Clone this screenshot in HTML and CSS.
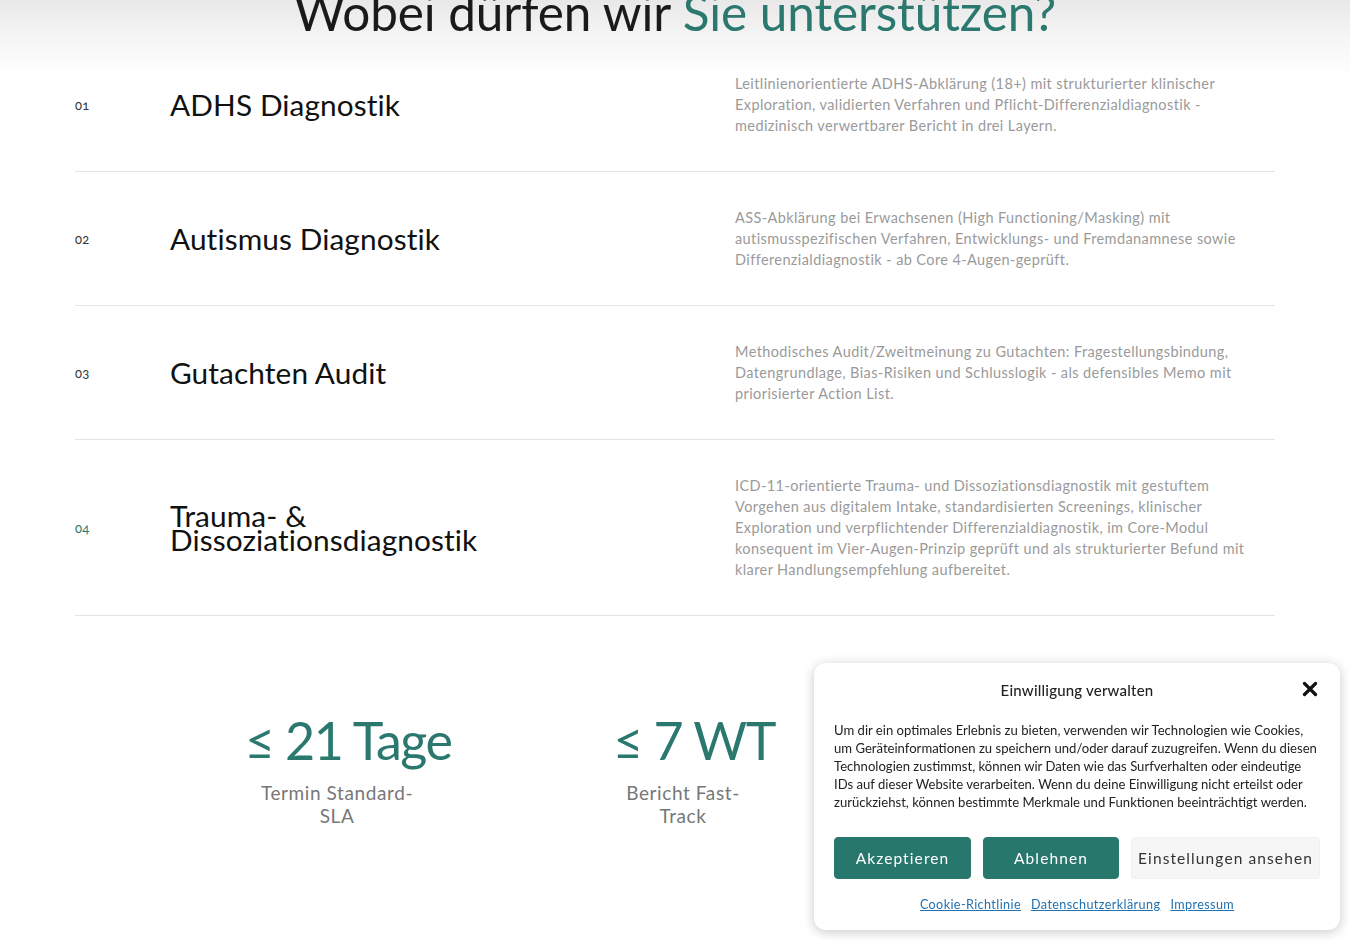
FILE: index.html
```html
<!DOCTYPE html>
<html lang="de">
<head>
<meta charset="utf-8">
<title>Leistungen</title>
<link rel="stylesheet" href="styles.css">
</head>
<body>
<main class="page">
  <section class="services">
    <h2 class="services-title">Wobei dürfen wir <span class="accent">Sie unterstützen?</span></h2>
    <div class="service-list">
      <article class="service">
        <span class="service-num">01</span>
        <h3 class="service-name">ADHS Diagnostik</h3>
        <p class="service-text">Leitlinienorientierte ADHS-Abklärung (18+) mit strukturierter klinischer Exploration, validierten Verfahren und Pflicht-Differenzialdiagnostik - medizinisch verwertbarer Bericht in drei Layern.</p>
      </article>
      <article class="service">
        <span class="service-num">02</span>
        <h3 class="service-name">Autismus Diagnostik</h3>
        <p class="service-text">ASS-Abklärung bei Erwachsenen (High Functioning/Masking) mit autismusspezifischen Verfahren, Entwicklungs- und Fremdanamnese sowie Differenzialdiagnostik - ab Core 4-Augen-geprüft.</p>
      </article>
      <article class="service">
        <span class="service-num">03</span>
        <h3 class="service-name">Gutachten Audit</h3>
        <p class="service-text">Methodisches Audit/Zweitmeinung zu Gutachten: Fragestellungsbindung, Datengrundlage, Bias-Risiken und Schlusslogik - als defensibles Memo mit priorisierter Action List.</p>
      </article>
      <article class="service is-active">
        <span class="service-num">04</span>
        <h3 class="service-name">Trauma- &amp; Dissoziationsdiagnostik</h3>
        <p class="service-text">ICD-11-orientierte Trauma- und Dissoziationsdiagnostik mit gestuftem Vorgehen aus digitalem Intake, standardisierten Screenings, klinischer Exploration und verpflichtender Differenzialdiagnostik, im Core-Modul konsequent im Vier-Augen-Prinzip geprüft und als strukturierter Befund mit klarer Handlungsempfehlung aufbereitet.</p>
      </article>
    </div>
  </section>

  <section class="stats">
    <div class="stat">
      <div class="stat-value">≤ 21 Tage</div>
      <div class="stat-label">Termin Standard-SLA</div>
    </div>
    <div class="stat">
      <div class="stat-value">≤ 7 WT</div>
      <div class="stat-label">Bericht Fast-Track</div>
    </div>
  </section>
</main>

<div class="consent" role="dialog" aria-label="Einwilligung verwalten">
  <div class="consent-head">
    <span class="consent-title">Einwilligung verwalten</span>
    <button class="consent-close" aria-label="Schließen">
      <svg viewBox="0 0 16 16" width="16" height="16"><path d="M2.5 2.5 L13.5 13.5 M13.5 2.5 L2.5 13.5" stroke="#111" stroke-width="3.2" stroke-linecap="round"/></svg>
    </button>
  </div>
  <p class="consent-text">Um dir ein optimales Erlebnis zu bieten, verwenden wir Technologien wie Cookies, um Geräteinformationen zu speichern und/oder darauf zuzugreifen. Wenn du diesen Technologien zustimmst, können wir Daten wie das Surfverhalten oder eindeutige IDs auf dieser Website verarbeiten. Wenn du deine Einwilligung nicht erteilst oder zurückziehst, können bestimmte Merkmale und Funktionen beeinträchtigt werden.</p>
  <div class="consent-buttons">
    <button class="btn btn-primary btn-accept">Akzeptieren</button>
    <button class="btn btn-primary btn-deny">Ablehnen</button>
    <button class="btn btn-light">Einstellungen ansehen</button>
  </div>
  <div class="consent-links">
    <a href="#">Cookie-Richtlinie</a>
    <a href="#">Datenschutzerklärung</a>
    <a href="#">Impressum</a>
  </div>
</div>
</body>
</html>
```

FILE: styles.css
```css
* { box-sizing: border-box; }

html, body {
  margin: 0;
  padding: 0;
}

body {
  width: 1350px;
  height: 940px;
  overflow: hidden;
  font-family: Lato, "Liberation Sans", sans-serif;
  color: #111;
  background: #fff linear-gradient(#e8e8e8 0, #f6f6f6 40px, #fff 78px) no-repeat;
  background-size: 100% 80px;
}

.page {
  width: 1200px;
  margin: 0 auto;
}

.services-title {
  margin: -13px 0 0;
  height: 51px;
  font-family: Lato, "Liberation Sans", sans-serif;
  font-weight: 400;
  font-size: 49.5px;
  line-height: 50px;
  text-align: center;
  color: #1a1a1a;
  letter-spacing: -0.1px;
}

.accent { color: #2a786e; }

.service {
  display: grid;
  grid-template-columns: 95px 565px 1fr;
  align-items: center;
  padding: 35px 0;
  border-bottom: 1px solid #e4e4e4;
}

.service-num {
  font-size: 13px;
  color: #333;
  letter-spacing: 0.3px;
  font-variant-numeric: oldstyle-nums;
  font-feature-settings: "onum" 1;
}

.service.is-active .service-num { color: #2a786e; }

.service-name {
  margin: 0;
  max-width: 380px;
  font-weight: 400;
  font-size: 29.8px;
  line-height: 24px;
  color: #111;
  letter-spacing: 0.1px;
}

.service-text {
  margin: 0;
  max-width: 525px;
  font-size: 14.5px;
  line-height: 21px;
  color: #9a9a9a;
  letter-spacing: 0.4px;
}

.stats {
  display: grid;
  grid-template-columns: repeat(3, 300px);
  column-gap: 46px;
  justify-content: start;
  padding: 94px 0 0 112px;
}

.stat { text-align: center; }

.stat-value {
  font-family: Lato, "Liberation Sans", sans-serif;
  font-size: 52px;
  line-height: 60px;
  color: #2a786e;
  letter-spacing: -1.5px;
  padding-left: 22px;
}

.stat-label {
  width: 158px;
  margin: 11px auto 0;
  font-size: 19px;
  line-height: 23px;
  color: #777;
  letter-spacing: 0.6px;
}

/* consent dialog */
.consent {
  position: fixed;
  right: 10px;
  bottom: 10px;
  width: 526px;
  padding: 15px 20px 18px;
  background: #fff;
  border-radius: 12px;
  box-shadow: 0 2px 12px rgba(0, 0, 0, 0.22);
  font-family: Lato, "Liberation Sans", sans-serif;
}

.consent-head {
  display: flex;
  justify-content: center;
  align-items: center;
  position: relative;
  height: 24px;
}

.consent-title {
  font-size: 15px;
  font-weight: 500;
  color: #222;
  letter-spacing: 0.2px;
}

.consent-close {
  position: absolute;
  right: 2px;
  top: 3px;
  border: 0;
  padding: 0;
  background: none;
  width: 16px;
  height: 16px;
}

.consent-close svg { display: block; }

.consent-text {
  margin: 19px 0 0;
  font-size: 13.1px;
  line-height: 18px;
  color: #222;
}

.consent-buttons {
  display: flex;
  gap: 12px;
  margin-top: 26px;
}

.btn {
  height: 42px;
  border-radius: 4px;
  font-family: Lato, "Liberation Sans", sans-serif;
  font-size: 15.5px;
  letter-spacing: 1.1px;
  cursor: pointer;
}

.btn-primary {
  background: #28776d;
  color: #fff;
  border: 1px solid #28776d;
}

.btn-accept { width: 137px; }
.btn-deny { width: 136px; }

.btn-light {
  width: 189px;
  background: #f6f6f6;
  color: #333;
  border: 1px solid #f0f0f0;
}

.consent-links {
  display: flex;
  justify-content: center;
  gap: 10px;
  margin-top: 18px;
}

.consent-links a {
  font-size: 12.6px;
  color: #2271b1;
  letter-spacing: 0.4px;
}
```
